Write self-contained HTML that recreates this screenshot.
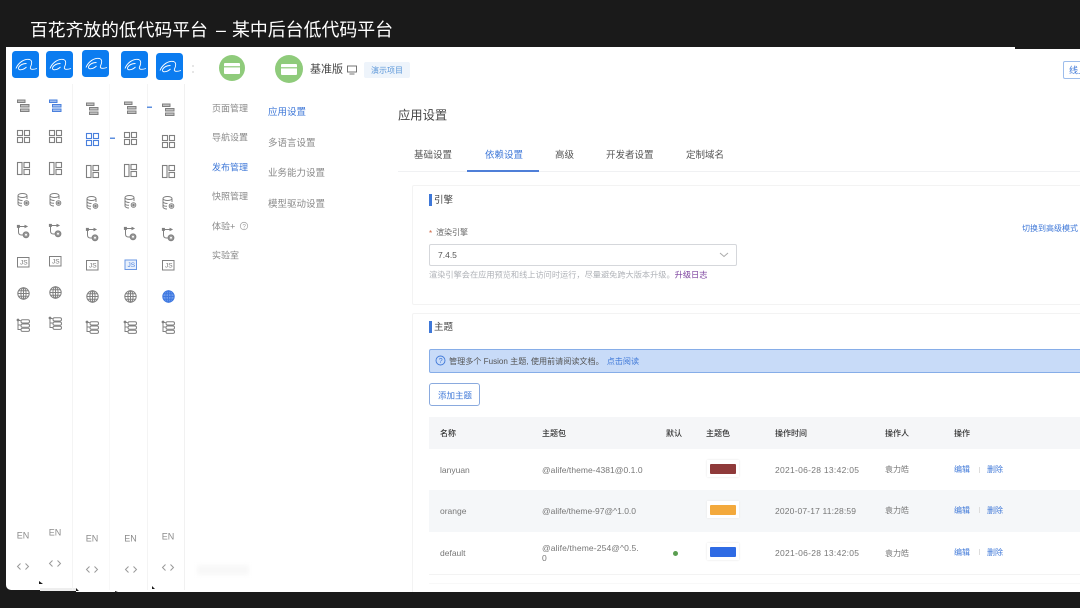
<!DOCTYPE html>
<html lang="zh-CN">
<head>
<meta charset="utf-8">
<title>百花齐放的低代码平台</title>
<style>
html,body{margin:0;padding:0;width:1080px;height:608px;overflow:hidden;background:#1a1a1a}
body{position:relative;font-family:"Liberation Sans","Noto Sans CJK SC",sans-serif}
#w{position:absolute;left:0;top:0;width:1080px;height:608px;overflow:hidden;filter:blur(.35px)}
.t{position:absolute;white-space:nowrap;line-height:1;transform:translateY(calc(-50% + .8px))}
.l{transform:translateY(-50%)}
.b{position:absolute;box-sizing:border-box}
.g{color:#8a8a8a}.d{color:#555}.bl{color:#3f78d8}
.s9{font-size:9px}.s95{font-size:9.5px}.s8{font-size:8px}.s85{font-size:8.5px}
.h{color:#333;font-weight:500}
</style>
</head>
<body>
<div id="w">
<div class="t l" style="left:30px;top:31px;font-size:17.800px;color:#fff">百花齐放的低代码平台</div>
<div class="t l" style="left:216px;top:31px;font-size:17.800px;color:#fff">–</div>
<div class="t l" style="left:232px;top:31px;font-size:17.900px;color:#fff">某中后台低代码平台</div>

<!-- white page -->
<div class="b" style="left:6px;top:47px;width:1009px;height:543px;background:#fff;border-radius:0 0 0 5px"></div>
<div class="b" style="left:1015px;top:49px;width:65px;height:543px;background:#fff"></div>
<div class="b" style="left:40px;top:588px;width:36px;height:3px;background:#eee"></div>
<div class="b" style="left:76px;top:590px;width:1004px;height:2px;background:#fff"></div>
<div class="b" style="left:72px;top:84px;width:1px;height:506px;background:#f4f4f4"></div>
<div class="b" style="left:109px;top:84px;width:1px;height:506px;background:#f8f8f8"></div>
<div class="b" style="left:147px;top:84px;width:1px;height:506px;background:#f4f4f4"></div>
<div class="b" style="left:184px;top:84px;width:1px;height:506px;background:#f1f1f1"></div>
<div class="b" style="left:197px;top:565px;width:52px;height:10px;background:#f8f8f8;filter:blur(2px)"></div>

<!-- left rail -->
<svg class="b" style="left:0;top:0" width="1080" height="608" viewBox="0 0 1080 608">
<defs>
<g id="logo"><rect width="27" height="27" rx="3.500" fill="#0b7cf0"/><path d="M4 17.500C6.500 11 13 7.500 17.500 8.500c3 .8 2.500 4.500 1 7.500-1 2.500 2 3 6.500 1.500M14.500 12.500C10 12.500 6.500 15 6.500 17.500c0 2 4.500 1.800 8-1.500" fill="none" stroke="#fff" stroke-width=".9"/></g>
<g id="i1" fill="none" stroke="currentColor" stroke-width="1"><rect x="0.500" y="1" width="7.500" height="2.500" fill="currentColor" fill-opacity=".5"/><rect x="3.500" y="5.500" width="8.500" height="2.500" fill="currentColor" fill-opacity=".5"/><rect x="3.500" y="10" width="8.500" height="2.500" fill="currentColor" fill-opacity=".5"/></g>
<g id="i2" fill="none" stroke="currentColor" stroke-width="1.100"><rect x=".5" y=".5" width="5" height="5"/><rect x="7.500" y=".5" width="5" height="5"/><rect x=".5" y="7.500" width="5" height="5"/><rect x="7.500" y="7.500" width="5" height="5"/></g>
<g id="i3" fill="none" stroke="currentColor" stroke-width="1.100"><rect x=".5" y=".5" width="4.500" height="12"/><rect x="7" y=".5" width="5.500" height="5"/><rect x="7" y="7.500" width="5.500" height="5"/></g>
<g id="i4" fill="none" stroke="currentColor" stroke-width="1"><ellipse cx="5.500" cy="2.500" rx="4.500" ry="2"/><path d="M1 2.500v8.500c0 1.200 2 2 4 2M10 2.500V6M1 5.500c0 1.200 2 2 4.500 2M1 8.500c0 1.200 2 1.800 4 1.800"/><circle cx="9.500" cy="10" r="2.300" fill="#fff"/><circle cx="9.500" cy="10" r=".8" fill="currentColor"/></g>
<g id="i5" fill="none" stroke="currentColor" stroke-width="1"><path d="M1.500 1.500V7c0 2 1 3 3 3H6M1.500 1.500H8"/><rect x=".4" y=".4" width="2" height="2" fill="currentColor"/><path d="M8 .5l2 1-2 1z" fill="currentColor"/><circle cx="9" cy="9.800" r="2.900" fill="currentColor" fill-opacity=".8"/><circle cx="9" cy="9.800" r="1" fill="#fff" stroke="none"/></g>
<g id="i7" fill="none" stroke="currentColor" stroke-width="1"><circle cx="6.500" cy="6.500" r="5.700"/><ellipse cx="6.500" cy="6.500" rx="2.600" ry="5.700"/><path d="M6.500 .8v11.400M.8 6.500h11.400M1.600 3.700h9.800M1.600 9.300h9.800"/></g>
<g id="i8" fill="none" stroke="currentColor" stroke-width="1"><circle cx="1" cy="1" r=".9" fill="currentColor"/><path d="M1 1v9.500H3.500M1 6H3.500M1 1.500H3.500"/><rect x="4" y=".8" width="8.500" height="3.200" rx="1.500"/><rect x="4" y="5" width="8.500" height="3.200" rx="1.500"/><rect x="4" y="9.200" width="8.500" height="3.200" rx="1.500"/></g>
<g id="js"><rect x=".5" y=".5" width="11.500" height="9.500" fill="none" stroke="currentColor"/></g>
<g id="cd" fill="none" stroke="currentColor" stroke-width="1"><path d="M3.500 .5L.5 3.500l3 3M8.500 .5l3 3-3 3"/></g>
</defs>

<use href="#logo" x="12" y="51"/><use href="#logo" x="46" y="51"/><use href="#logo" x="82" y="50"/><use href="#logo" x="121" y="51"/><use href="#logo" x="156" y="53"/>
<path d="M193 65v2M193 71v2" stroke="#ccc" stroke-width="1"/>

<g style="color:#808080">
<use href="#i1" x="17" y="99"/><use href="#i2" x="17" y="130"/><use href="#i3" x="17" y="162"/><use href="#i4" x="17" y="193"/><use href="#i5" x="17" y="225"/><use href="#js" x="17" y="257"/><use href="#i7" x="17" y="287"/><use href="#i8" x="17" y="319"/>
<g style="color:#4a80dd"><use href="#i1" x="49" y="99"/></g><use href="#i2" x="49" y="130"/><use href="#i3" x="49" y="162"/><use href="#i4" x="49" y="193"/><use href="#i5" x="49" y="224"/><use href="#js" x="49" y="256"/><use href="#i7" x="49" y="286"/><use href="#i8" x="49" y="317"/>
<use href="#i1" x="86" y="102"/><g style="color:#4a80dd"><use href="#i2" x="86" y="133"/></g><use href="#i3" x="86" y="165"/><use href="#i4" x="86" y="196"/><use href="#i5" x="86" y="228"/><use href="#js" x="86" y="260"/><use href="#i7" x="86" y="290"/><use href="#i8" x="86" y="321"/>
<use href="#i1" x="124" y="101"/><use href="#i2" x="124" y="132"/><use href="#i3" x="124" y="164"/><use href="#i4" x="124" y="195"/><use href="#i5" x="124" y="227"/><g style="color:#6a97e3"><rect x="125" y="260" width="11.500" height="9.500" fill="#e8f0fc"/><use href="#js" x="124.500" y="259.500"/></g><use href="#i7" x="124" y="290"/><use href="#i8" x="124" y="321"/>
<use href="#i1" x="162" y="103"/><use href="#i2" x="162" y="135"/><use href="#i3" x="162" y="165"/><use href="#i4" x="162" y="196"/><use href="#i5" x="162" y="228"/><use href="#js" x="162" y="260"/><g style="color:#3f78e0"><circle cx="168.500" cy="296.500" r="6" fill="#6f9cec"/><use href="#i7" x="162" y="290"/></g><use href="#i8" x="162" y="321"/>
</g>
<rect x="110" y="137.500" width="5" height="1.500" fill="#5d8fdf"/><rect x="147" y="106.500" width="5" height="1.500" fill="#5d8fdf"/>

<g font-family="'Liberation Sans',sans-serif" font-size="6.500" fill="#777">
<text x="20" y="264.500">JS</text><text x="52" y="263.500">JS</text><text x="89" y="267.500">JS</text><text x="127.500" y="267" fill="#4a80dd">JS</text><text x="165" y="267.500">JS</text>
</g>
<g font-family="'Liberation Sans',sans-serif" font-size="9" fill="#8a8a8a" text-anchor="middle">
<text x="23" y="538.500">EN</text><text x="55" y="535.500">EN</text><text x="92" y="541.500">EN</text><text x="130.500" y="541.500">EN</text><text x="168" y="539.500">EN</text>
</g>
<g style="color:#999">
<use href="#cd" x="17" y="563"/><use href="#cd" x="49" y="560"/><use href="#cd" x="86" y="566"/><use href="#cd" x="125" y="566"/><use href="#cd" x="162" y="564"/>
</g>
<path d="M39 581l4 3h-4zM76 588l3 3h-3zM115 591l3 1h-3zM152 586l3 3h-3z" fill="#1a1a1a"/>

<!-- header icons -->
<circle cx="232" cy="68" r="13" fill="#8fcb7b"/><rect x="224" y="63" width="16" height="11" rx="1" fill="#fff"/><rect x="224" y="66" width="16" height="1.500" fill="#a5d495"/>
<circle cx="289" cy="69" r="14" fill="#8fcb7b"/><rect x="281" y="64" width="16" height="11" rx="1" fill="#fff"/><rect x="281" y="67" width="16" height="1.500" fill="#a5d495"/>
<g fill="none" stroke="#666" stroke-width=".9"><rect x="347.500" y="66" width="9" height="6"/><path d="M349.500 74h5"/></g>

<circle cx="244" cy="226" r="3.700" fill="none" stroke="#aaa" stroke-width=".8"/>
<text x="242.500" y="228.500" font-size="6" fill="#999" font-family="'Liberation Sans',sans-serif">?</text>
</svg>

<!-- secondary nav -->
<div class="t s9 g" style="left:212px;top:108px">页面管理</div>
<div class="t s9 g" style="left:212px;top:137px">导航设置</div>
<div class="t s9 bl" style="left:212px;top:167px">发布管理</div>
<div class="t s9 g" style="left:212px;top:196px">快照管理</div>
<div class="t s9 g" style="left:212px;top:226px">体验+</div>
<div class="t s9 g" style="left:212px;top:255px">实验室</div>
<div class="t s95 bl" style="left:268px;top:112px">应用设置</div>
<div class="t s95 g" style="left:268px;top:143px">多语言设置</div>
<div class="t s95 g" style="left:268px;top:173px">业务能力设置</div>
<div class="t s95 g" style="left:268px;top:204px">模型驱动设置</div>

<!-- header -->
<div class="t" style="left:310px;top:69px;font-size:11px;color:#444">基准版</div>
<div class="b" style="left:364px;top:62px;width:46px;height:16px;background:#eef4fb;border-radius:2px"></div>
<div class="t s8" style="left:371px;top:70px;color:#5c97d9">演示项目</div>
<div class="b" style="left:1063px;top:61px;width:30px;height:18px;border:1px solid #9dbdec;border-radius:2px"></div>
<div class="t s9 bl" style="left:1069px;top:70px">线上</div>

<div class="t" style="left:398px;top:115px;font-size:12.300px;color:#444">应用设置</div>

<!-- tabs -->
<div class="b" style="left:398px;top:171px;width:682px;height:1px;background:#f0f1f3"></div>
<div class="b" style="left:467px;top:170px;width:72px;height:2px;background:#4f7fd8"></div>
<div class="t s95 d" style="left:414px;top:155px">基础设置</div>
<div class="t s95 bl" style="left:485px;top:155px">依赖设置</div>
<div class="t s95 d" style="left:555px;top:155px">高级</div>
<div class="t s95 d" style="left:606px;top:155px">开发者设置</div>
<div class="t s95 d" style="left:686px;top:155px">定制域名</div>

<!-- card 1 -->
<div class="b" style="left:412px;top:185px;width:700px;height:120px;border:1px solid #f3f3f3;border-radius:2px"></div>
<div class="b" style="left:429px;top:194px;width:3px;height:12px;background:#3f78d8"></div>
<div class="t" style="left:434px;top:200px;font-size:9.500px;color:#444">引擎</div>
<div class="t s8" style="left:429px;top:233px;color:#d0623d">*</div>
<div class="t s8" style="left:436px;top:232px;color:#666">渲染引擎</div>
<div class="t s8 bl" style="left:1022px;top:228px">切换到高级模式</div>
<div class="b" style="left:429px;top:244px;width:308px;height:22px;border:1px solid #d5d7db;border-radius:2px;background:#fff"></div>
<div class="t s85 l" style="left:438px;top:255px;color:#555">7.4.5</div>
<svg class="b" style="left:719px;top:251px" width="10" height="8" viewBox="0 0 10 8"><path d="M1 2l4 3.500L9 2" fill="none" stroke="#aaa" stroke-width="1"/></svg>
<div class="t" style="left:429px;top:275px;font-size:8.200px;color:#b0b3b8">渲染引擎会在应用预览和线上访问时运行，尽量避免跨大版本升级。<span style="color:#7a3f9d">升级日志</span></div>

<!-- card 2 -->
<div class="b" style="left:412px;top:313px;width:700px;height:279px;border:1px solid #f3f3f3;border-bottom:0;border-radius:2px 2px 0 0"></div>
<div class="b" style="left:429px;top:321px;width:3px;height:12px;background:#3f78d8"></div>
<div class="t" style="left:434px;top:327px;font-size:9.500px;color:#444">主题</div>
<div class="b" style="left:429px;top:349px;width:680px;height:24px;background:#c8dbf8;border:1px solid #86ade8;border-radius:2px"></div>
<svg class="b" style="left:435px;top:355px" width="11" height="11" viewBox="0 0 11 11"><circle cx="5.500" cy="5.500" r="4.500" fill="none" stroke="#3f78d8" stroke-width=".9"/><text x="3.700" y="8" font-size="7" fill="#3f78d8" font-family="'Liberation Sans',sans-serif">?</text></svg>
<div class="t" style="left:449px;top:361px;font-size:8.100px;color:#555">管理多个 Fusion 主题, 使用前请阅读文档。<span style="color:#3f78d8;margin-left:3px">点击阅读</span></div>
<div class="b" style="left:429px;top:383px;width:51px;height:23px;border:1px solid #8aaade;border-radius:3px;background:#fff"></div>
<div class="t s85 bl" style="left:438px;top:395px">添加主题</div>

<!-- table -->
<div class="b" style="left:429px;top:417px;width:651px;height:32px;background:#f5f6f8"></div>
<div class="b" style="left:429px;top:490px;width:651px;height:42px;background:#f5f7f9"></div>
<div class="b" style="left:429px;top:574px;width:651px;height:1px;background:#f3f3f3"></div>
<div class="b" style="left:429px;top:583px;width:651px;height:1px;background:#f8f8f8"></div>

<div class="t s8 h" style="left:440px;top:433px">名称</div>
<div class="t s8 h" style="left:542px;top:433px">主题包</div>
<div class="t s8 h" style="left:666px;top:433px">默认</div>
<div class="t s8 h" style="left:706px;top:433px">主题色</div>
<div class="t s8 h" style="left:775px;top:433px">操作时间</div>
<div class="t s8 h" style="left:885px;top:433px">操作人</div>
<div class="t s8 h" style="left:954px;top:433px">操作</div>

<div class="t l s85" style="left:440px;top:469.500px;color:#777">lanyuan</div>
<div class="t l s85" style="left:542px;top:469.500px;color:#777;letter-spacing:.05px">@alife/theme-4381@0.1.0</div>
<div class="b" style="left:707px;top:460px;width:32px;height:17px;background:#fff;box-shadow:0 0 2px #e4e4e4"></div>
<div class="b" style="left:710px;top:463.500px;width:26px;height:10px;background:#8f3a3a;border-radius:1px"></div>
<div class="t l s85" style="left:775px;top:469.500px;color:#777;letter-spacing:.28px">2021-06-28 13:42:05</div>
<div class="t s8" style="left:885px;top:469px;color:#777">袁力皓</div>
<div class="t s8 bl" style="left:954px;top:469px">编辑</div><div class="b" style="left:979px;top:467px;width:1px;height:6px;background:#ddd"></div><div class="t s8 bl" style="left:987px;top:469px">删除</div>

<div class="t l s85" style="left:440px;top:510.500px;color:#777">orange</div>
<div class="t l s85" style="left:542px;top:510.500px;color:#777">@alife/theme-97@^1.0.0</div>
<div class="b" style="left:707px;top:501px;width:32px;height:17px;background:#fff;box-shadow:0 0 2px #e4e4e4"></div>
<div class="b" style="left:710px;top:504.500px;width:26px;height:10px;background:#f3a93c;border-radius:1px"></div>
<div class="t l s85" style="left:775px;top:510.500px;color:#777;letter-spacing:.15px">2020-07-17 11:28:59</div>
<div class="t s8" style="left:885px;top:510px;color:#777">袁力皓</div>
<div class="t s8 bl" style="left:954px;top:510px">编辑</div><div class="b" style="left:979px;top:507px;width:1px;height:6px;background:#ddd"></div><div class="t s8 bl" style="left:987px;top:510px">删除</div>

<div class="t l s85" style="left:440px;top:552.500px;color:#777">default</div>
<div class="t l s85" style="left:542px;top:547.500px;color:#777;letter-spacing:.13px">@alife/theme-254@^0.5.</div>
<div class="t l s85" style="left:542px;top:558px;color:#777">0</div>
<div class="b" style="left:672.500px;top:550.500px;width:5px;height:5px;border-radius:50%;background:#5a9e50"></div>
<div class="b" style="left:707px;top:543px;width:32px;height:17px;background:#fff;box-shadow:0 0 2px #e4e4e4"></div>
<div class="b" style="left:710px;top:547px;width:26px;height:10px;background:#2f6be4;border-radius:1px"></div>
<div class="t l s85" style="left:775px;top:552.500px;color:#777;letter-spacing:.28px">2021-06-28 13:42:05</div>
<div class="t s8" style="left:885px;top:553px;color:#777">袁力皓</div>
<div class="t s8 bl" style="left:954px;top:552px">编辑</div><div class="b" style="left:979px;top:549px;width:1px;height:6px;background:#ddd"></div><div class="t s8 bl" style="left:987px;top:552px">删除</div>
</div>
</body>
</html>
